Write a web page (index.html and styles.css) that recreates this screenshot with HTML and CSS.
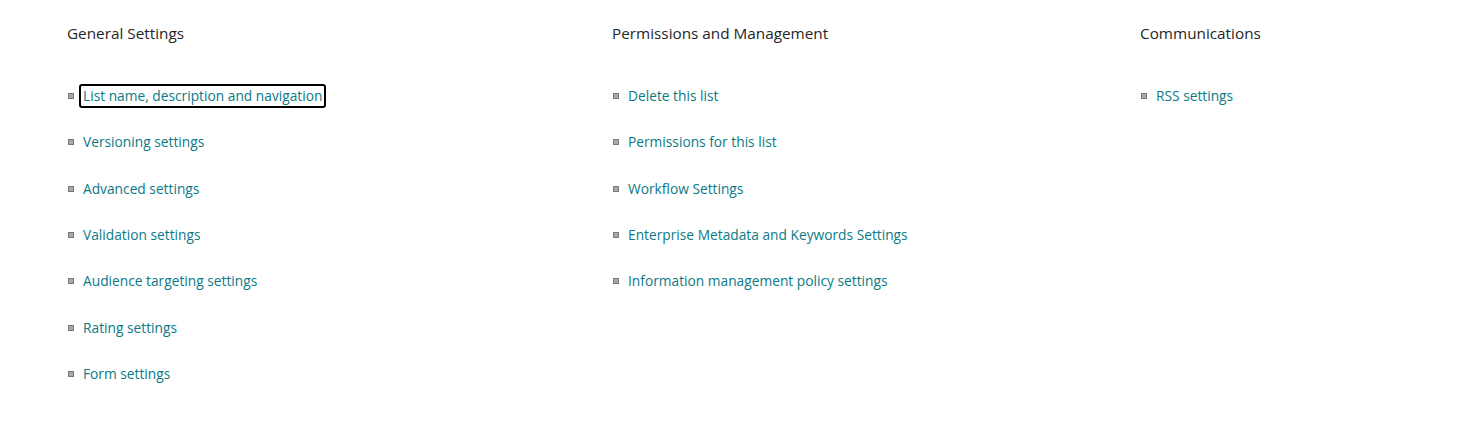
FILE: index.html
```html
<!DOCTYPE html>
<html lang="en">
<head>
<meta charset="utf-8">
<title>Settings</title>
<link rel="stylesheet" href="styles.css">
</head>
<body>
<div class="settings">
  <section class="group group-general">
    <h2 class="group-title">General Settings</h2>
    <ul class="links">
      <li><a href="#" class="focused">List name, description and navigation</a></li>
      <li><a href="#">Versioning settings</a></li>
      <li><a href="#">Advanced settings</a></li>
      <li><a href="#">Validation settings</a></li>
      <li><a href="#">Audience targeting settings</a></li>
      <li><a href="#">Rating settings</a></li>
      <li><a href="#">Form settings</a></li>
    </ul>
  </section>
  <section class="group group-perm">
    <h2 class="group-title">Permissions and Management</h2>
    <ul class="links">
      <li><a href="#">Delete this list</a></li>
      <li><a href="#">Permissions for this list</a></li>
      <li><a href="#">Workflow Settings</a></li>
      <li><a href="#">Enterprise Metadata and Keywords Settings</a></li>
      <li><a href="#">Information management policy settings</a></li>
    </ul>
  </section>
  <section class="group group-comm">
    <h2 class="group-title">Communications</h2>
    <ul class="links">
      <li><a href="#">RSS settings</a></li>
    </ul>
  </section>
</div>
</body>
</html>
```

FILE: styles.css
```css
html, body {
  margin: 0;
  padding: 0;
  background: #ffffff;
}
body {
  font-family: "Open Sans", "Noto Sans", sans-serif;
  color: #333333;
}
.settings {
  display: flex;
  padding: 22px 0 0 67px;
}
.group-general { width: 545px; }
.group-perm { width: 528px; }
.group-comm { flex: 1; }
.group-title {
  margin: 0;
  font-size: 15.3px;
  font-weight: 400;
  line-height: 22px;
  color: #262626;
}
.links {
  list-style: none;
  margin: 41px 0 0 0;
  padding: 0;
  display: flex;
  flex-direction: column;
  gap: 24.33px;
}
.links li {
  display: flex;
  align-items: center;
  height: 22px;
}
.links li::before {
  content: "";
  width: 4px;
  height: 4px;
  margin: 0 7px 0 1px;
  background: #a8a8a8;
  border: 1px solid #7a7a7a;
  flex: none;
}
.links a {
  font-size: 13.75px;
  color: #0b7a86;
  text-decoration: none;
  line-height: 20px;
  padding: 0 2px;
  margin-left: -2px;
  border: 2px solid transparent;
  border-radius: 3px;
}
.links a.focused {
  border-color: #000000;
}
```
